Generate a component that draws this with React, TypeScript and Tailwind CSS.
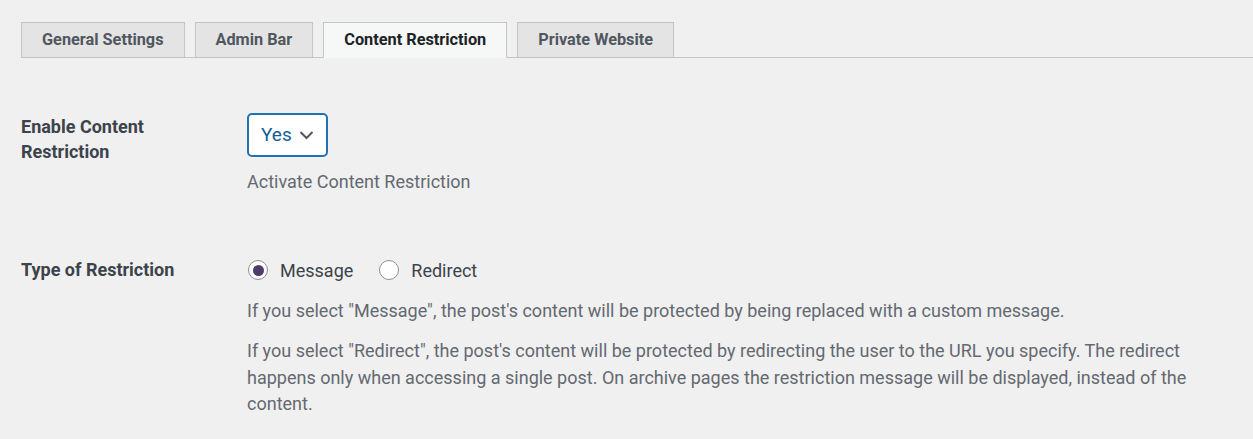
import React from 'react';

const tabs = ['General Settings', 'Admin Bar', 'Content Restriction', 'Private Website'];

const Radio: React.FC<{ checked?: boolean; label: string }> = ({ checked, label }) => (
  <label className="flex items-center gap-3">
    <span className="w-5 h-5 rounded-full border border-[#8c8f94] bg-white flex items-center justify-center">
      {checked && <span className="w-[11px] h-[11px] rounded-full bg-[#4f3b6d]" />}
    </span>
    <span className="text-[18px] text-[#3c434a]">{label}</span>
  </label>
);

export default function App() {
  const active = 'Content Restriction';

  return (
    <div className="w-[1253px] h-[439px] bg-[#f0f0f1] overflow-hidden" style={{ fontFamily: 'Roboto, "Open Sans", sans-serif' }}>
      {/* tabs */}
      <div className="pt-[22px] pl-[21px]">
        <div className="flex gap-[10px] border-b border-[#c3c4c7]">
          {tabs.map((t) => (
            <div
              key={t}
              className={
                t === active
                  ? 'h-[36px] px-5 -mb-px flex items-center border border-[#c3c4c7] border-b-[#f6f7f7] bg-[#f6f7f7] text-[16.3px] font-bold text-[#1d2327]'
                  : 'h-[36px] px-5 -mb-px flex items-center border border-[#c3c4c7] bg-[#e4e4e5] text-[16.3px] font-bold text-[#50575e]'
              }
            >
              {t}
            </div>
          ))}
        </div>
      </div>

      {/* enable content restriction */}
      <div className="flex pl-[21px] mt-[55px]">
        <div className="w-[226px] pt-px text-[18px] leading-[25px] font-bold text-[#3c434a]">
          Enable Content<br />Restriction
        </div>
        <div className="flex flex-col">
          <div className="w-[81px] h-[44px] border-2 border-[#2271b1] rounded-[5px] bg-white flex items-center pl-3 pr-[12px] justify-between">
            <span className="text-[19px] text-[#135e96]">Yes</span>
            <svg width="15" height="10" viewBox="0 0 15 10" fill="none">
              <path d="M1.5 2l6 6 6-6" stroke="#50575e" strokeWidth="2" />
            </svg>
          </div>
          <p className="mt-[13px] text-[18px] leading-6 text-[#646970]">Activate Content Restriction</p>
        </div>
      </div>

      {/* type of restriction */}
      <div className="flex pl-[21px] mt-[64px]">
        <div className="w-[226px] text-[18px] leading-6 font-bold text-[#3c434a]">Type of Restriction</div>
        <div className="flex flex-col">
          <div className="flex items-center gap-[26px] h-6 pl-px">
            <Radio checked label="Message" />
            <Radio label="Redirect" />
          </div>
          <p className="mt-[16px] text-[18px] leading-[26px] text-[#646970]">
            If you select "Message", the post's content will be protected by being replaced with a custom message.
          </p>
          <p className="mt-[14px] max-w-[960px] text-[18px] leading-[26.5px] text-[#646970]">
            If you select "Redirect", the post's content will be protected by redirecting the user to the URL you specify. The redirect happens only when accessing a single post. On archive pages the restriction message will be displayed, instead of the content.
          </p>
        </div>
      </div>
    </div>
  );
}
